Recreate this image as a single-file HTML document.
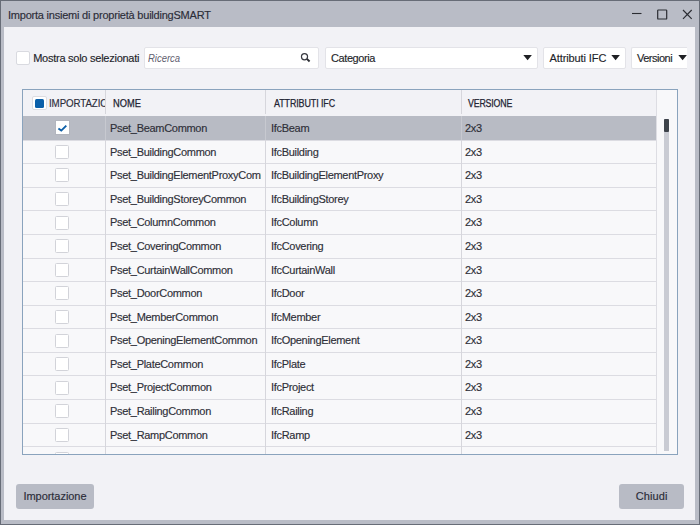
<!DOCTYPE html>
<html><head><meta charset="utf-8"><style>
*{margin:0;padding:0;box-sizing:border-box}
html,body{width:700px;height:525px;overflow:hidden;background:#676c77}
body{position:relative;font-family:"Liberation Sans",sans-serif;color:#2a2a33}
.frame{position:absolute;left:1px;top:1px;width:698px;height:523px;background:#b9bcc6}
.content{position:absolute;left:4px;top:27px;width:691px;height:493px;background:#f2f2f6}
.abs{position:absolute}
.t{font-size:11px;letter-spacing:-0.3px;white-space:nowrap;position:absolute;-webkit-text-stroke:0.15px currentColor}
.box{position:absolute;background:#fff;border:1px solid #e3e3e8;border-radius:2px}
.tri{position:absolute;width:0;height:0;border-left:4.8px solid transparent;border-right:4.8px solid transparent;border-top:5.6px solid #1f2024}
.table{position:absolute;left:22px;top:89px;width:656px;height:366px;border:1px solid #8aa3bd;background:#f8f8fa;overflow:hidden}
.hdr{position:absolute;left:0;top:0;width:633px;height:26px;background:#f2f2f6}
.ht{position:absolute;top:8.0px;font-size:10px;color:#222433;-webkit-text-stroke:0.25px #222433;white-space:nowrap;transform-origin:0 0}
.sb{position:absolute;left:633px;top:0;width:21px;height:364px;background:#f8f8fa;border-left:1px solid #dddde3}
.btn{position:absolute;top:484px;height:25px;background:#b8bbc5;border-radius:3px}
</style></head><body>
<div class="frame"></div>
<div class="t" style="left:8px;top:8.5px;font-size:11px;letter-spacing:-0.22px;color:#2b2c38;">Importa insiemi di proprietà buildingSMART</div>
<svg class="abs" style="left:630px;top:5px" width="66" height="18" viewBox="0 0 66 18">
 <path d="M2 8.5 H11.5" stroke="#2a2c32" stroke-width="1.1"/>
 <rect x="27.7" y="5" width="9" height="9" rx="0.6" fill="none" stroke="#2a2c32" stroke-width="1.2"/>
 <path d="M53 5 L61.7 13.9 M61.7 5 L53 13.9" stroke="#2a2c32" stroke-width="1.15"/>
</svg>
<div class="content"></div>
<!-- toolbar -->
<div class="box" style="left:16px;top:51px;width:14px;height:14px;border-color:#d9dae0"></div>
<div class="t" style="left:33.2px;top:52px;font-size:11px;letter-spacing:-0.255px;color:#1e1f2a;">Mostra solo selezionati</div>
<div class="box" style="left:144px;top:47px;width:175px;height:22px"></div>
<div class="t" style="left:148px;top:52px;font-size:11px;letter-spacing:0px;color:#5f6070;font-style:italic;transform:scaleX(0.86);transform-origin:0 0;-webkit-text-stroke:0">Ricerca</div>
<svg class="abs" style="left:299px;top:51px" width="14" height="14" viewBox="0 0 14 14">
 <circle cx="5.5" cy="5.75" r="3.05" fill="none" stroke="#3a3c43" stroke-width="1.2"/>
 <path d="M7.9 7.9 L10.6 10.5" stroke="#2a2c32" stroke-width="1.9"/>
</svg>
<div class="box" style="left:325px;top:47px;width:213px;height:22px"></div>
<div class="t" style="left:331px;top:52px;font-size:11px;letter-spacing:-0.41px;color:#1e1f2a;">Categoria</div>
<svg class="abs" style="left:521px;top:52px" width="14" height="10"><polygon points="2.3,2.9 10.9,2.9 6.6,8.2" fill="#1f2024"/></svg>
<div class="box" style="left:543px;top:47px;width:83px;height:22px"></div>
<div class="t" style="left:549.5px;top:52px;font-size:11px;letter-spacing:-0.1px;color:#1e1f2a;">Attributi IFC</div>
<svg class="abs" style="left:608.5px;top:52px" width="14" height="10"><polygon points="2.3,2.9 10.9,2.9 6.6,8.2" fill="#1f2024"/></svg>
<div class="box" style="left:631px;top:47px;width:60px;height:22px;border-right:none;border-radius:2px 0 0 2px"></div>
<div class="t" style="left:637px;top:52px;font-size:11px;letter-spacing:-0.5px;color:#1e1f2a;">Versioni</div>
<svg class="abs" style="left:675.8px;top:52px" width="14" height="10"><polygon points="2.3,2.9 10.9,2.9 6.6,8.2" fill="#1f2024"/></svg>
<div class="abs" style="left:687px;top:45px;width:8px;height:26px;background:#f2f2f6"></div>
<!-- table -->
<div class="table">
 <div class="hdr">
  <div class="abs" style="left:9px;top:6px;width:15px;height:14px;background:#fff;border:1px solid #dcdce2;border-radius:2px"><div class="abs" style="left:2px;top:1.7px;width:9px;height:9px;background:#0a5fa9;border-radius:1.5px"></div></div>
  <div class="abs" style="left:0;top:0;width:82px;height:26px;overflow:hidden"><div class="t" style="left:26px;top:6.5px;font-size:11px;letter-spacing:-0.1px;color:#2b2c3a;transform:scaleX(0.885);transform-origin:0 0">IMPORTAZIONE</div></div>
  <div class="ht" style="left:89.5px;letter-spacing:0px;transform:scaleX(0.93)">NOME</div>
  <div class="ht" style="left:250.5px;letter-spacing:-0.1px;transform:scaleX(0.89)">ATTRIBUTI IFC</div>
  <div class="ht" style="left:444.5px;letter-spacing:-0.2px;transform:scaleX(0.88)">VERSIONE</div>
 </div>
 <div class="abs" style="left:0;top:26.00px;width:633px;height:23.59px;background:#b8bbc4"></div>
 <div class="abs" style="left:33.20px;top:31.30px;width:13px;height:13px;background:#fff;box-shadow:0 0 0 1px #b2b5be"><svg width="13" height="13" viewBox="0 0 13 13" style="position:absolute;left:0;top:0"><path d="M2.4 7.4 L5.3 9.6 L10.3 4.6" fill="none" stroke="#0d5fa8" stroke-width="1.9"/></svg></div>
 <div class="abs" style="left:82.00px;top:26.00px;width:156px;height:23px;overflow:hidden"><div class="t" style="left:5px;top:6px;font-size:11px;letter-spacing:-0.3px;color:#2e2f38">Pset_BeamCommon</div></div>
 <div class="t" style="left:248px;top:32.00px;font-size:11px;letter-spacing:-0.3px;color:#2e2f38">IfcBeam</div>
 <div class="t" style="left:442px;top:32.00px;font-size:11px;letter-spacing:-0.3px;color:#2e2f38">2x3</div>
 <div class="abs" style="left:0;top:49.59px;width:633px;height:23.59px;background:#f8f8fa"></div>
 <div class="abs" style="left:0;top:49.59px;width:633px;height:1px;background:#dcdce2"></div>
 <div class="abs" style="left:32.10px;top:54.89px;width:14px;height:14px;background:#fff;border:1px solid #d2d3d9;border-radius:1.5px"></div>
 <div class="abs" style="left:82.00px;top:49.59px;width:156px;height:23px;overflow:hidden"><div class="t" style="left:5px;top:6px;font-size:11px;letter-spacing:-0.3px;color:#2e2f38">Pset_BuildingCommon</div></div>
 <div class="t" style="left:248px;top:55.59px;font-size:11px;letter-spacing:-0.3px;color:#2e2f38">IfcBuilding</div>
 <div class="t" style="left:442px;top:55.59px;font-size:11px;letter-spacing:-0.3px;color:#2e2f38">2x3</div>
 <div class="abs" style="left:0;top:73.18px;width:633px;height:23.59px;background:#f8f8fa"></div>
 <div class="abs" style="left:0;top:73.18px;width:633px;height:1px;background:#dcdce2"></div>
 <div class="abs" style="left:32.10px;top:78.48px;width:14px;height:14px;background:#fff;border:1px solid #d2d3d9;border-radius:1.5px"></div>
 <div class="abs" style="left:82.00px;top:73.18px;width:156px;height:23px;overflow:hidden"><div class="t" style="left:5px;top:6px;font-size:11px;letter-spacing:-0.3px;color:#2e2f38">Pset_BuildingElementProxyCommon</div></div>
 <div class="t" style="left:248px;top:79.18px;font-size:11px;letter-spacing:-0.3px;color:#2e2f38">IfcBuildingElementProxy</div>
 <div class="t" style="left:442px;top:79.18px;font-size:11px;letter-spacing:-0.3px;color:#2e2f38">2x3</div>
 <div class="abs" style="left:0;top:96.77px;width:633px;height:23.59px;background:#f8f8fa"></div>
 <div class="abs" style="left:0;top:96.77px;width:633px;height:1px;background:#dcdce2"></div>
 <div class="abs" style="left:32.10px;top:102.07px;width:14px;height:14px;background:#fff;border:1px solid #d2d3d9;border-radius:1.5px"></div>
 <div class="abs" style="left:82.00px;top:96.77px;width:156px;height:23px;overflow:hidden"><div class="t" style="left:5px;top:6px;font-size:11px;letter-spacing:-0.3px;color:#2e2f38">Pset_BuildingStoreyCommon</div></div>
 <div class="t" style="left:248px;top:102.77px;font-size:11px;letter-spacing:-0.3px;color:#2e2f38">IfcBuildingStorey</div>
 <div class="t" style="left:442px;top:102.77px;font-size:11px;letter-spacing:-0.3px;color:#2e2f38">2x3</div>
 <div class="abs" style="left:0;top:120.36px;width:633px;height:23.59px;background:#f8f8fa"></div>
 <div class="abs" style="left:0;top:120.36px;width:633px;height:1px;background:#dcdce2"></div>
 <div class="abs" style="left:32.10px;top:125.66px;width:14px;height:14px;background:#fff;border:1px solid #d2d3d9;border-radius:1.5px"></div>
 <div class="abs" style="left:82.00px;top:120.36px;width:156px;height:23px;overflow:hidden"><div class="t" style="left:5px;top:6px;font-size:11px;letter-spacing:-0.3px;color:#2e2f38">Pset_ColumnCommon</div></div>
 <div class="t" style="left:248px;top:126.36px;font-size:11px;letter-spacing:-0.3px;color:#2e2f38">IfcColumn</div>
 <div class="t" style="left:442px;top:126.36px;font-size:11px;letter-spacing:-0.3px;color:#2e2f38">2x3</div>
 <div class="abs" style="left:0;top:143.95px;width:633px;height:23.59px;background:#f8f8fa"></div>
 <div class="abs" style="left:0;top:143.95px;width:633px;height:1px;background:#dcdce2"></div>
 <div class="abs" style="left:32.10px;top:149.25px;width:14px;height:14px;background:#fff;border:1px solid #d2d3d9;border-radius:1.5px"></div>
 <div class="abs" style="left:82.00px;top:143.95px;width:156px;height:23px;overflow:hidden"><div class="t" style="left:5px;top:6px;font-size:11px;letter-spacing:-0.3px;color:#2e2f38">Pset_CoveringCommon</div></div>
 <div class="t" style="left:248px;top:149.95px;font-size:11px;letter-spacing:-0.3px;color:#2e2f38">IfcCovering</div>
 <div class="t" style="left:442px;top:149.95px;font-size:11px;letter-spacing:-0.3px;color:#2e2f38">2x3</div>
 <div class="abs" style="left:0;top:167.54px;width:633px;height:23.59px;background:#f8f8fa"></div>
 <div class="abs" style="left:0;top:167.54px;width:633px;height:1px;background:#dcdce2"></div>
 <div class="abs" style="left:32.10px;top:172.84px;width:14px;height:14px;background:#fff;border:1px solid #d2d3d9;border-radius:1.5px"></div>
 <div class="abs" style="left:82.00px;top:167.54px;width:156px;height:23px;overflow:hidden"><div class="t" style="left:5px;top:6px;font-size:11px;letter-spacing:-0.3px;color:#2e2f38">Pset_CurtainWallCommon</div></div>
 <div class="t" style="left:248px;top:173.54px;font-size:11px;letter-spacing:-0.3px;color:#2e2f38">IfcCurtainWall</div>
 <div class="t" style="left:442px;top:173.54px;font-size:11px;letter-spacing:-0.3px;color:#2e2f38">2x3</div>
 <div class="abs" style="left:0;top:191.13px;width:633px;height:23.59px;background:#f8f8fa"></div>
 <div class="abs" style="left:0;top:191.13px;width:633px;height:1px;background:#dcdce2"></div>
 <div class="abs" style="left:32.10px;top:196.43px;width:14px;height:14px;background:#fff;border:1px solid #d2d3d9;border-radius:1.5px"></div>
 <div class="abs" style="left:82.00px;top:191.13px;width:156px;height:23px;overflow:hidden"><div class="t" style="left:5px;top:6px;font-size:11px;letter-spacing:-0.3px;color:#2e2f38">Pset_DoorCommon</div></div>
 <div class="t" style="left:248px;top:197.13px;font-size:11px;letter-spacing:-0.3px;color:#2e2f38">IfcDoor</div>
 <div class="t" style="left:442px;top:197.13px;font-size:11px;letter-spacing:-0.3px;color:#2e2f38">2x3</div>
 <div class="abs" style="left:0;top:214.72px;width:633px;height:23.59px;background:#f8f8fa"></div>
 <div class="abs" style="left:0;top:214.72px;width:633px;height:1px;background:#dcdce2"></div>
 <div class="abs" style="left:32.10px;top:220.02px;width:14px;height:14px;background:#fff;border:1px solid #d2d3d9;border-radius:1.5px"></div>
 <div class="abs" style="left:82.00px;top:214.72px;width:156px;height:23px;overflow:hidden"><div class="t" style="left:5px;top:6px;font-size:11px;letter-spacing:-0.3px;color:#2e2f38">Pset_MemberCommon</div></div>
 <div class="t" style="left:248px;top:220.72px;font-size:11px;letter-spacing:-0.3px;color:#2e2f38">IfcMember</div>
 <div class="t" style="left:442px;top:220.72px;font-size:11px;letter-spacing:-0.3px;color:#2e2f38">2x3</div>
 <div class="abs" style="left:0;top:238.31px;width:633px;height:23.59px;background:#f8f8fa"></div>
 <div class="abs" style="left:0;top:238.31px;width:633px;height:1px;background:#dcdce2"></div>
 <div class="abs" style="left:32.10px;top:243.61px;width:14px;height:14px;background:#fff;border:1px solid #d2d3d9;border-radius:1.5px"></div>
 <div class="abs" style="left:82.00px;top:238.31px;width:156px;height:23px;overflow:hidden"><div class="t" style="left:5px;top:6px;font-size:11px;letter-spacing:-0.3px;color:#2e2f38">Pset_OpeningElementCommon</div></div>
 <div class="t" style="left:248px;top:244.31px;font-size:11px;letter-spacing:-0.3px;color:#2e2f38">IfcOpeningElement</div>
 <div class="t" style="left:442px;top:244.31px;font-size:11px;letter-spacing:-0.3px;color:#2e2f38">2x3</div>
 <div class="abs" style="left:0;top:261.90px;width:633px;height:23.59px;background:#f8f8fa"></div>
 <div class="abs" style="left:0;top:261.90px;width:633px;height:1px;background:#dcdce2"></div>
 <div class="abs" style="left:32.10px;top:267.20px;width:14px;height:14px;background:#fff;border:1px solid #d2d3d9;border-radius:1.5px"></div>
 <div class="abs" style="left:82.00px;top:261.90px;width:156px;height:23px;overflow:hidden"><div class="t" style="left:5px;top:6px;font-size:11px;letter-spacing:-0.3px;color:#2e2f38">Pset_PlateCommon</div></div>
 <div class="t" style="left:248px;top:267.90px;font-size:11px;letter-spacing:-0.3px;color:#2e2f38">IfcPlate</div>
 <div class="t" style="left:442px;top:267.90px;font-size:11px;letter-spacing:-0.3px;color:#2e2f38">2x3</div>
 <div class="abs" style="left:0;top:285.49px;width:633px;height:23.59px;background:#f8f8fa"></div>
 <div class="abs" style="left:0;top:285.49px;width:633px;height:1px;background:#dcdce2"></div>
 <div class="abs" style="left:32.10px;top:290.79px;width:14px;height:14px;background:#fff;border:1px solid #d2d3d9;border-radius:1.5px"></div>
 <div class="abs" style="left:82.00px;top:285.49px;width:156px;height:23px;overflow:hidden"><div class="t" style="left:5px;top:6px;font-size:11px;letter-spacing:-0.3px;color:#2e2f38">Pset_ProjectCommon</div></div>
 <div class="t" style="left:248px;top:291.49px;font-size:11px;letter-spacing:-0.3px;color:#2e2f38">IfcProject</div>
 <div class="t" style="left:442px;top:291.49px;font-size:11px;letter-spacing:-0.3px;color:#2e2f38">2x3</div>
 <div class="abs" style="left:0;top:309.08px;width:633px;height:23.59px;background:#f8f8fa"></div>
 <div class="abs" style="left:0;top:309.08px;width:633px;height:1px;background:#dcdce2"></div>
 <div class="abs" style="left:32.10px;top:314.38px;width:14px;height:14px;background:#fff;border:1px solid #d2d3d9;border-radius:1.5px"></div>
 <div class="abs" style="left:82.00px;top:309.08px;width:156px;height:23px;overflow:hidden"><div class="t" style="left:5px;top:6px;font-size:11px;letter-spacing:-0.3px;color:#2e2f38">Pset_RailingCommon</div></div>
 <div class="t" style="left:248px;top:315.08px;font-size:11px;letter-spacing:-0.3px;color:#2e2f38">IfcRailing</div>
 <div class="t" style="left:442px;top:315.08px;font-size:11px;letter-spacing:-0.3px;color:#2e2f38">2x3</div>
 <div class="abs" style="left:0;top:332.67px;width:633px;height:23.59px;background:#f8f8fa"></div>
 <div class="abs" style="left:0;top:332.67px;width:633px;height:1px;background:#dcdce2"></div>
 <div class="abs" style="left:32.10px;top:337.97px;width:14px;height:14px;background:#fff;border:1px solid #d2d3d9;border-radius:1.5px"></div>
 <div class="abs" style="left:82.00px;top:332.67px;width:156px;height:23px;overflow:hidden"><div class="t" style="left:5px;top:6px;font-size:11px;letter-spacing:-0.3px;color:#2e2f38">Pset_RampCommon</div></div>
 <div class="t" style="left:248px;top:338.67px;font-size:11px;letter-spacing:-0.3px;color:#2e2f38">IfcRamp</div>
 <div class="t" style="left:442px;top:338.67px;font-size:11px;letter-spacing:-0.3px;color:#2e2f38">2x3</div>
 <div class="abs" style="left:0;top:356.26px;width:633px;height:23.59px;background:#f8f8fa"></div>
 <div class="abs" style="left:0;top:356.26px;width:633px;height:1px;background:#dcdce2"></div>
 <div class="abs" style="left:32.10px;top:361.56px;width:14px;height:14px;background:#fff;border:1px solid #d2d3d9;border-radius:1.5px"></div>
 <div class="abs" style="left:82px;top:0;width:1px;height:23.59px;background:#d6d6dc;top:0"></div>
 <div class="abs" style="left:82px;top:26px;width:1px;height:23.59px;background:#c7c9d0"></div>
 <div class="abs" style="left:82px;top:49.59px;width:1px;height:314.41px;background:#d6d6dc"></div>
 <div class="abs" style="left:242px;top:0;width:1px;height:23.59px;background:#d6d6dc;top:0"></div>
 <div class="abs" style="left:242px;top:26px;width:1px;height:23.59px;background:#c7c9d0"></div>
 <div class="abs" style="left:242px;top:49.59px;width:1px;height:314.41px;background:#d6d6dc"></div>
 <div class="abs" style="left:438px;top:0;width:1px;height:23.59px;background:#d6d6dc;top:0"></div>
 <div class="abs" style="left:438px;top:26px;width:1px;height:23.59px;background:#c7c9d0"></div>
 <div class="abs" style="left:438px;top:49.59px;width:1px;height:314.41px;background:#d6d6dc"></div>
 <div class="sb">
  <div class="abs" style="left:7.2px;top:29px;width:5px;height:332px;background:#c9cbd3;border-radius:0.5px"></div>
  <div class="abs" style="left:7.2px;top:29px;width:5px;height:13px;background:#3d424a;border-radius:1px"></div>
 </div>
</div>
<!-- buttons -->
<div class="btn" style="left:16px;width:78px"></div>
<div class="t" style="left:23.5px;top:490px;font-size:11px;letter-spacing:-0.05px;color:#2b2c38;">Importazione</div>
<div class="btn" style="left:619px;width:65px"></div>
<div class="t" style="left:635.7px;top:490px;font-size:11px;letter-spacing:0.1px;color:#2b2c38;">Chiudi</div>
</body></html>
